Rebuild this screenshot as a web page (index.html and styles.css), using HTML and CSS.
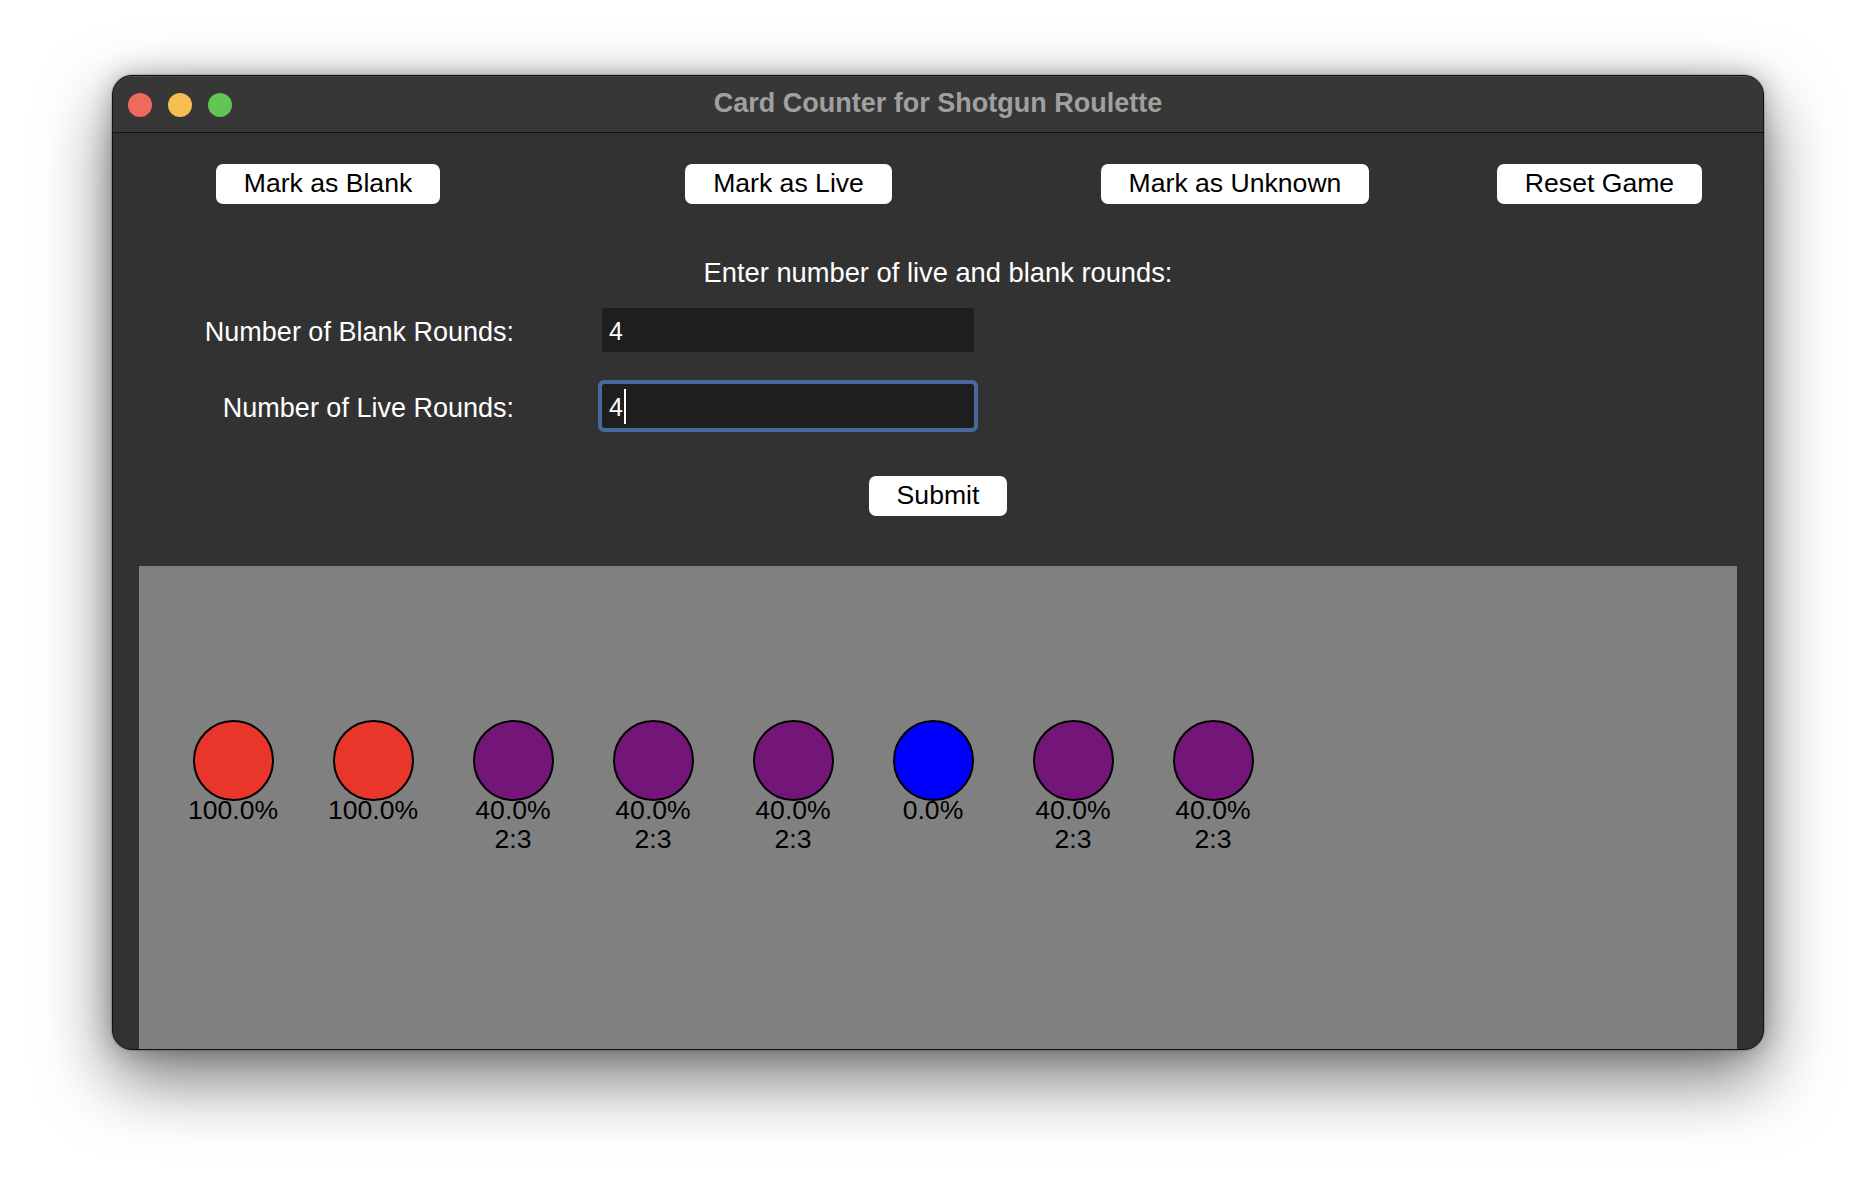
FILE: index.html
```html
<!DOCTYPE html>
<html lang="en">
<head>
<meta charset="utf-8">
<title>Card Counter for Shotgun Roulette</title>
<link rel="stylesheet" href="styles.css">
</head>
<body>
<div class="window">
  <div class="titlebar">
    <div class="lights">
      <span class="light red"></span>
      <span class="light yellow"></span>
      <span class="light green"></span>
    </div>
    <div class="title">Card Counter for Shotgun Roulette</div>
    <div></div>
  </div>
  <div class="content">
    <div class="actions">
      <button class="btn">Mark as Blank</button>
      <button class="btn">Mark as Live</button>
      <button class="btn">Mark as Unknown</button>
      <button class="btn">Reset Game</button>
    </div>
    <div class="prompt">Enter number of live and blank rounds:</div>
    <div class="form">
      <div class="label">Number of Blank Rounds:</div>
      <div class="entry"><span class="entry-text">4</span></div>
      <div class="label">Number of Live Rounds:</div>
      <div class="entry focused"><span class="entry-text">4</span><span class="caret"></span></div>
    </div>
    <div class="submit-row"><button class="btn">Submit</button></div>
    <div class="canvas">
      <div class="shells">
        <div class="shell"><div class="dot live"></div><div class="info">100.0%</div></div>
        <div class="shell"><div class="dot live"></div><div class="info">100.0%</div></div>
        <div class="shell"><div class="dot unknown"></div><div class="info">40.0%<br>2:3</div></div>
        <div class="shell"><div class="dot unknown"></div><div class="info">40.0%<br>2:3</div></div>
        <div class="shell"><div class="dot unknown"></div><div class="info">40.0%<br>2:3</div></div>
        <div class="shell"><div class="dot blank"></div><div class="info">0.0%</div></div>
        <div class="shell"><div class="dot unknown"></div><div class="info">40.0%<br>2:3</div></div>
        <div class="shell"><div class="dot unknown"></div><div class="info">40.0%<br>2:3</div></div>
      </div>
    </div>
  </div>
</div>
</body>
</html>
```
FILE: styles.css
```css
* { box-sizing: border-box; }
html, body {
  margin: 0;
  padding: 0;
  background: #ffffff;
  width: 1876px;
  height: 1198px;
  overflow: hidden;
  font-family: "Liberation Sans", Arial, sans-serif;
}
body {
  padding-top: 75px;
  padding-left: 112px;
}
.window {
  width: 1652px;
  height: 975px;
  border-radius: 20px;
  overflow: hidden;
  background: #323232;
  border: 1px solid #111;
  box-shadow: 0 0 0 1px rgba(0,0,0,0.15), 0 28px 70px rgba(0,0,0,0.55), 0 0 24px rgba(0,0,0,0.25);
  display: flex;
  flex-direction: column;
}
.titlebar {
  height: 57px;
  flex: none;
  background: #373737;
  border-bottom: 1px solid #121212;
  display: grid;
  grid-template-columns: 1fr auto 1fr;
  align-items: center;
  box-shadow: inset 0 1px 0 rgba(255,255,255,0.12);
}
.lights {
  display: flex;
  gap: 16px;
  padding-left: 15px;
  padding-top: 1px;
}
.light {
  width: 24px;
  height: 24px;
  border-radius: 50%;
  display: block;
}
.light.red { background: #ee6a5f; }
.light.yellow { background: #f5bf4f; }
.light.green { background: #61c454; }
.title {
  font-weight: bold;
  font-size: 27px;
  color: #a0a0a0;
  line-height: 30px;
  padding-bottom: 3px;
}
.content {
  flex: 1;
  display: flex;
  flex-direction: column;
  padding-top: 31px;
}
.actions {
  display: grid;
  grid-template-columns: 430px 491px 402px 1fr;
  justify-items: center;
}
.btn {
  font-family: "Liberation Sans", Arial, sans-serif;
  font-size: 26.6px;
  color: #000;
  background: #fff;
  border: none;
  border-radius: 7px;
  height: 40px;
  line-height: 38px;
  padding: 0 28px 2px;
  margin: 0;
}
.prompt {
  margin-top: 54px;
  text-align: center;
  font-size: 27.3px;
  line-height: 30px;
  color: #fff;
}
.form {
  margin-top: 16px;
  display: grid;
  grid-template-columns: 401px 380px;
  column-gap: 84px;
  row-gap: 24px;
  align-items: center;
}
.label {
  text-align: right;
  font-size: 27px;
  line-height: 30px;
  color: #fff;
  padding-top: 3px;
}
.entry {
  height: 52px;
  border: 4px solid transparent;
  border-radius: 6px;
  background: #1e1e1e;
  background-clip: padding-box;
  display: flex;
  align-items: center;
  padding-left: 7px;
  color: #fff;
  font-size: 25px;
}
.entry.focused {
  border-color: #48699d;
}
.entry-text {
  line-height: 30px;
  padding-top: 2px;
}
.caret {
  display: block;
  width: 2px;
  height: 35px;
  background: #fff;
  margin-left: 1px;
}
.submit-row {
  margin-top: 44px;
  display: flex;
  justify-content: center;
}
.canvas {
  margin: 50px 26px 0;
  flex: 1;
  background: #808080;
  padding-top: 154px;
}
.shells {
  display: flex;
  padding-left: 24px;
}
.shell {
  width: 140px;
  display: flex;
  flex-direction: column;
  align-items: center;
}
.dot {
  width: 81px;
  height: 81px;
  border-radius: 50%;
  border: 2px solid #000;
}
.dot.live { background: #e9362a; }
.dot.unknown { background: #741578; }
.dot.blank { background: #0000ff; }
.info {
  margin-top: -5px;
  text-align: center;
  font-size: 26.6px;
  line-height: 29px;
  color: #000;
}
```
